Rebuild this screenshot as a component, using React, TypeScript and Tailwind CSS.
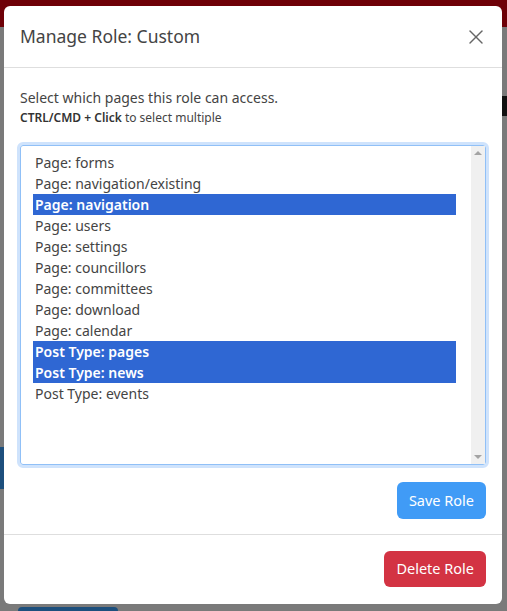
import { X } from 'lucide-react'

const options = [
  { label: 'Page: forms', selected: false },
  { label: 'Page: navigation/existing', selected: false },
  { label: 'Page: navigation', selected: true },
  { label: 'Page: users', selected: false },
  { label: 'Page: settings', selected: false },
  { label: 'Page: councillors', selected: false },
  { label: 'Page: committees', selected: false },
  { label: 'Page: download', selected: false },
  { label: 'Page: calendar', selected: false },
  { label: 'Post Type: pages', selected: true },
  { label: 'Post Type: news', selected: true },
  { label: 'Post Type: events', selected: false },
]

function PageBehind() {
  return (
    <div className="w-[507px] h-[611px] flex flex-col bg-[#7a7a7a]">
      <div className="h-[27px] bg-[#6e0007]" />
      <div className="flex-1 flex">
        <div className="w-[4px] flex flex-col">
          <div className="h-[420px]" />
          <div className="h-[42px] bg-[#1d4f7d]" />
        </div>
        <div className="flex-1 flex flex-col justify-end">
          <div className="ml-[14px] w-[100px] h-[4px] rounded-t bg-[#1d4f7d]" />
        </div>
        <div className="w-[5px] flex flex-col">
          <div className="h-[69px]" />
          <div className="h-[20px] bg-[#111]" />
        </div>
      </div>
    </div>
  )
}

export default function App() {
  return (
    <div className="relative w-[507px] h-[611px] overflow-hidden" style={{ fontFamily: '"Noto Sans", "Open Sans", sans-serif' }}>
      <PageBehind />

      <div className="absolute left-[4px] top-[6px] w-[498px] h-[598px] bg-white rounded-md flex flex-col text-[#3a3a3a]">
        <div className="h-[62px] flex items-center justify-between pl-[16px] pr-[14px] border-b border-[#dedede]">
          <h2 className="text-[17.5px] text-[#444]">Manage Role: Custom</h2>
          <X className="w-[24px] h-[24px] text-[#666]" strokeWidth={1.4} />
        </div>

        <div className="px-[13px] pt-[19px] pb-[15px] border-b border-[#dedede]">
          <p className="pl-[3px] text-[14px] leading-[21px] text-[#444]">Select which pages this role can access.</p>
          <p className="pl-[3px] mt-[1px] text-[12px] leading-[18px] text-[#444]">
            <span className="font-semibold text-[#333]">CTRL/CMD + Click</span> to select multiple
          </p>

          <div className="mt-[15px] rounded-[6px] border-[3px] border-[#cfe3fc]">
            <div className="h-[320px] border border-[#90c0f7] rounded-[3px] flex bg-white">
              <div className="flex-1 pl-[12px] pr-[15px] pt-[6px]">
                {options.map((o) => (
                  <div
                    key={o.label}
                    className={
                      o.selected
                        ? 'h-[21px] leading-[21px] px-[2px] text-[14px] bg-[#2f67d3] text-white font-semibold'
                        : 'h-[21px] leading-[21px] px-[2px] text-[14px] text-[#444]'
                    }
                  >
                    {o.label}
                  </div>
                ))}
              </div>
              <div className="w-[14px] bg-[#f0f0f0] flex flex-col items-center justify-between py-[5px]">
                <div className="w-0 h-0 border-l-[4px] border-r-[4px] border-b-[4px] border-l-transparent border-r-transparent border-b-[#a3a3a3]" />
                <div className="w-0 h-0 border-l-[4px] border-r-[4px] border-t-[4px] border-l-transparent border-r-transparent border-t-[#a3a3a3]" />
              </div>
            </div>
          </div>

          <div className="mt-[14px] flex justify-end pr-[3px]">
            <button className="h-[37px] px-[12px] rounded-[6px] bg-[#409bf6] text-white text-[14.5px]">Save Role</button>
          </div>
        </div>

        <div className="flex justify-end px-[16px] pt-[16px]">
          <button className="h-[36px] px-[12px] rounded-[6px] bg-[#d33343] text-white text-[14.5px]">Delete Role</button>
        </div>
      </div>
    </div>
  )
}
